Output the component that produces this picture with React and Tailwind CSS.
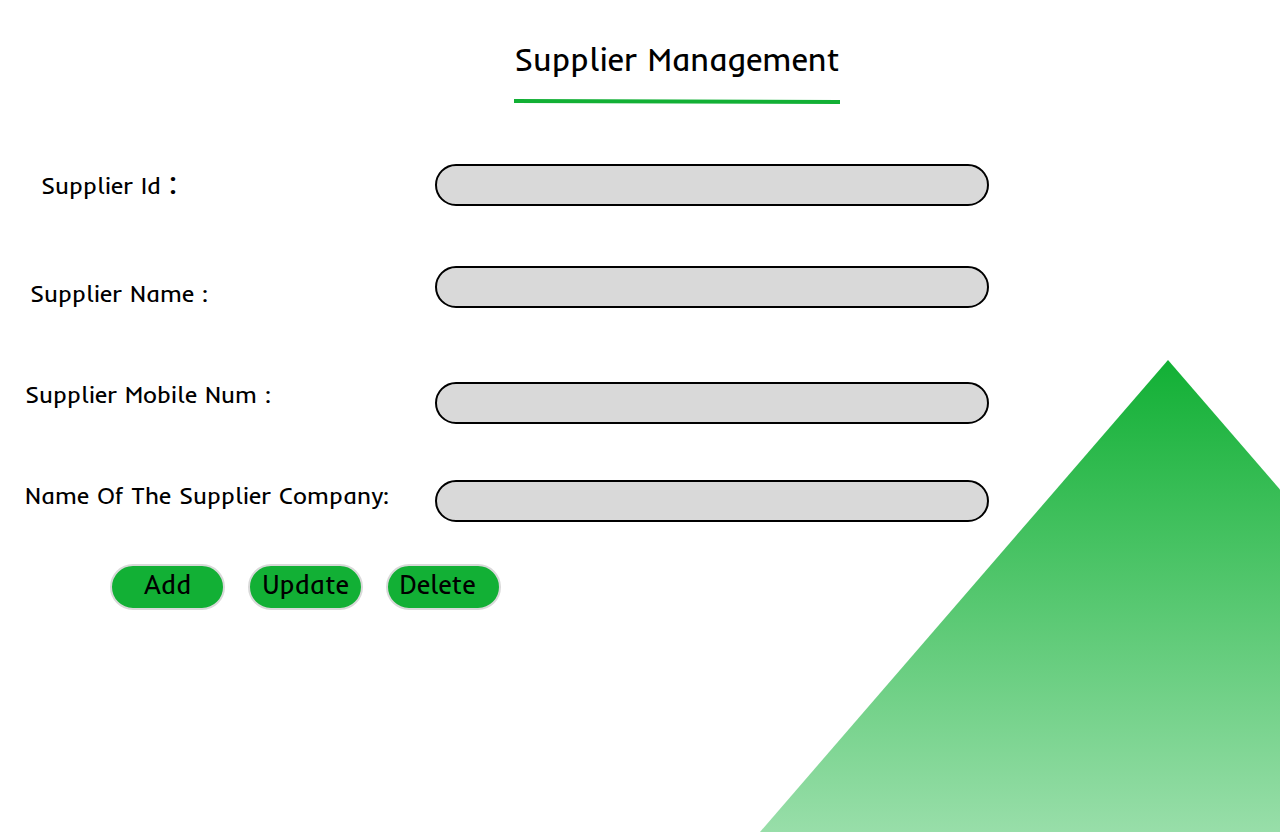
const fields = [
  { id: 'supplier-id', label: 'Supplier Id ', largeColon: true, row: 'mt-[60px] min-h-[42px]', indent: 'pl-[41px]', align: 'self-start' },
  { id: 'supplier-name', label: 'Supplier Name :', row: 'mt-[60px] min-h-14', indent: 'pl-[30px]', align: 'self-start' },
  { id: 'supplier-mobile', label: 'Supplier Mobile Num :', row: 'mt-11 min-h-[58px]', indent: 'pl-[25px]', align: 'self-end' },
  { id: 'supplier-company', label: 'Name Of The Supplier Company:', row: 'mt-[46px] min-h-[52px]', indent: 'pl-[25px]', align: 'self-end' },
];

const actions = [
  { name: 'Add', padding: 'px-2' },
  { name: 'Update', padding: 'px-2' },
  { name: 'Delete', padding: 'pl-2 pr-5' },
];

function Field({ id, label, largeColon, row, indent, align }) {
  return (
    <div className={`flex items-center ${row}`}>
      <label htmlFor={id} className={`w-[435px] shrink-0 whitespace-nowrap pb-0.5 text-2xl leading-8 ${indent}`}>
        {label}
        {largeColon && <span className="text-[32px] leading-7">:</span>}
      </label>
      <input
        id={id}
        type="text"
        className={`h-[42px] min-w-0 max-w-[554px] flex-1 rounded-full border-2 border-black bg-[#d9d9d9] px-5 text-xl ${align}`}
      />
    </div>
  );
}

export default function App() {
  return (
    <div className="relative min-h-screen overflow-hidden bg-white font-['Inder','ABeeZee','Noto_Sans',sans-serif] text-black">
      <svg
        aria-hidden="true"
        className="absolute bottom-0 right-0 h-[472px] w-[520px]"
        viewBox="0 0 520 472"
      >
        <defs>
          <linearGradient id="peak" x1="0" y1="0" x2="0" y2="1">
            <stop offset="0" stopColor="#12b035" />
            <stop offset="1" stopColor="#98dea9" />
          </linearGradient>
        </defs>
        <path d="M408 0 L520 129.5 V472 H0 Z" fill="url(#peak)" />
      </svg>

      <main className="relative">
        <header className="flex flex-col items-center pl-[74px] pt-10">
          <h1 className="whitespace-nowrap text-[32px] leading-[38px]">Supplier Management</h1>
          <svg aria-hidden="true" className="mt-5 h-1.5 w-[326px]" viewBox="0 0 326 6">
            <path d="M0 3 L326 4" stroke="#12b035" strokeWidth="4" />
          </svg>
        </header>

        <form onSubmit={(event) => event.preventDefault()}>
          {fields.map((field) => (
            <Field key={field.id} {...field} />
          ))}
          <div className="mt-[42px] flex gap-[23px] pl-[110px]">
            {actions.map(({ name, padding }) => (
              <button
                key={name}
                type="button"
                className={`h-[46px] w-[115px] rounded-full border-2 border-[#d9d9d9] bg-[#12b035] pb-1 text-[26px] leading-8 ${padding}`}
              >
                {name}
              </button>
            ))}
          </div>
        </form>
      </main>
    </div>
  );
}
